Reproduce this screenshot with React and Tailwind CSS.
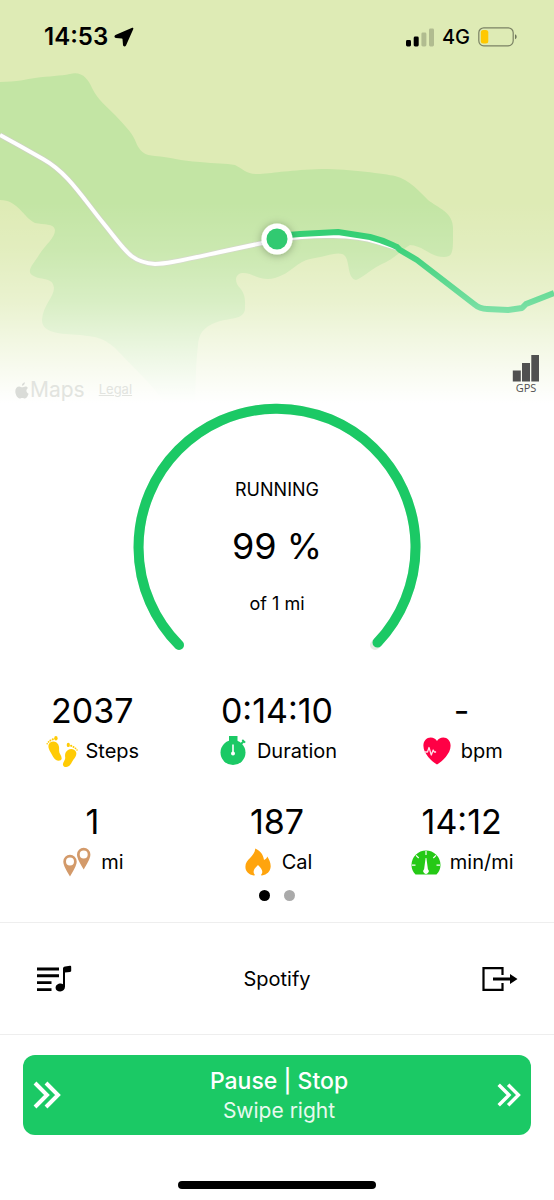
import React from 'react';

const StepsIcon = () => (
  <svg viewBox="0 0 32 32" className="w-8 h-8 shrink-0" fill="#ffcb05" aria-hidden="true">
    <path d="M2.500 10C3 7 7.500 5.200 10.500 7.500c2.900 2.300 2.800 5.500 2.600 8.300-.2 2.700 2.700 4.900 2.600 7.700-.2 2.300-3.600 2.900-5.700 1.500C7.400 23.200 6.600 20.500 4.700 17.500 3.300 15 2 12.800 2.500 10z" />
    <ellipse cx="9.900" cy="3.300" rx="1.700" ry="2.300" />
    <circle cx="6.800" cy="4.300" r="1.100" />
    <circle cx="4.400" cy="5.400" r="1" />
    <circle cx="2.600" cy="6.900" r=".9" />
    <circle cx="1.200" cy="8.700" r=".8" />
    <path d="M30.200 17.500c-.7-3.200-5-4.500-8.200-2.600-3 1.900-3.200 4.900-2.800 7.600.3 2.800-2.200 4.200-2.300 6.900 0 2.500 3.500 3.200 5.600 1.900 2.600-1.600 3.200-4.200 5-6.700 1.700-2.300 3.300-4.300 2.700-7.100z" />
    <ellipse cx="22.300" cy="9.900" rx="1.600" ry="2.200" />
    <circle cx="25.200" cy="10.800" r="1.100" />
    <circle cx="27.500" cy="11.900" r="1" />
    <circle cx="29.500" cy="13.300" r=".9" />
    <circle cx="31" cy="15" r=".8" />
  </svg>
);

const DurationIcon = () => (
  <svg viewBox="0 0 32 32" className="w-8 h-8 shrink-0" aria-hidden="true">
    <path d="M12 1h8.500v7H12z" fill="#1bc965" />
    <path d="M23.500 9.500l3.500-3.500" stroke="#1bc965" strokeWidth="2" />
    <path d="M25.300 4.900l2.800 2.800" stroke="#1bc965" strokeWidth="1.800" />
    <circle cx="16" cy="17.600" r="12.500" fill="#1bc965" />
    <path d="M16 9.500v9" stroke="#fff" strokeWidth="1.600" />
    <circle cx="16" cy="18.500" r="2" fill="#fff" />
  </svg>
);

const HeartIcon = () => (
  <svg viewBox="0 0 32 32" className="w-8 h-8 shrink-0" aria-hidden="true">
    <path d="M16 29.600C12.500 27.300 2.400 19.500 2.400 10.700 2.400 5.500 5.700 2.400 9.700 2.400c2.800 0 5 1.500 6.300 3.500 1.300-2 3.500-3.500 6.300-3.500 4 0 7.300 3.100 7.300 8.300 0 8.800-10.100 16.600-13.600 18.900z" fill="#ff0045" />
    <path d="M3 17h3.500l1.500-4.500 2.300 7.500 1.900-5 1.100 2h1.800" fill="none" stroke="#ffe1e9" strokeWidth="1.300" strokeLinejoin="round" />
  </svg>
);

const DistanceIcon = () => (
  <svg viewBox="0 0 32 32" className="w-8 h-8 shrink-0" fill="#d39a6a" fillRule="evenodd" aria-hidden="true">
    <path d="M9 8.700a6.700 6.700 0 0 1 6.700 6.700c0 4.300-3.600 9.400-6.700 15.100-3.100-5.700-6.700-10.800-6.700-15.100A6.700 6.700 0 0 1 9 8.700zm0 2.800a4 4 0 1 0 0 8 4 4 0 0 0 0-8z" />
    <path d="M22.700 1.800a6.700 6.700 0 0 1 6.700 6.700c0 4.300-3.600 9.400-6.700 15.100C19.600 17.900 16 12.800 16 8.500a6.700 6.700 0 0 1 6.700-6.700zm0 2.800a4 4 0 1 0 0 8 4 4 0 0 0 0-8z" />
  </svg>
);

const FlameIcon = () => (
  <svg viewBox="0 0 32 32" className="w-8 h-8 shrink-0" aria-hidden="true">
    <path d="M13.300 2.500c5 2.300 8 6.100 8.700 11.400 1.900-.7 2.900-1.900 3.300-3.400 2 3.100 3.800 6.800 3.300 10.800-.5 4.500-3.600 7.200-8.600 8.200-.8.200-1.300-.3-.7-1 2-2.400 1.100-5.400-3.300-9.500-4.400 4.100-5.400 7.100-3.400 9.500.6.700 0 1.200-.8 1C6.600 28.600 3.400 25.200 3.400 20.700c0-7.700 9.200-9.700 9.900-18.200z" fill="#ffa40d" />
  </svg>
);

const PaceIcon = () => (
  <svg viewBox="0 0 32 32" className="w-8 h-8 shrink-0" aria-hidden="true">
    <path d="M5.500 28.500C3 26.300 1.500 22.800 1.500 19a14.500 14.500 0 0 1 29 0c0 3.800-1.500 7.300-4 9.500z" fill="#25c916" />
    <path d="M16 5v4M6 9.300l2.700 2.700M26 9.300L23.300 12M2 19.200h3.500M30 19.200h-3.500" stroke="#fff" strokeWidth="1.200" />
    <path d="M15.600 12h.8l1.500 11.200a2.700 2.700 0 1 1-3.800 0z" fill="#fff" />
  </svg>
);

const Chevrons = ({ className }) => (
  <svg viewBox="0 0 28 28" className={className} fill="none" stroke="currentColor" strokeWidth="4" aria-hidden="true">
    <path d="M2 2l12 12L2 26M13 2l12 12-12 12" />
  </svg>
);

const stats = [
  { value: '2037', label: 'Steps', Icon: StepsIcon },
  { value: '0:14:10', label: 'Duration', Icon: DurationIcon },
  { value: '-', label: 'bpm', Icon: HeartIcon },
  { value: '1', label: 'mi', Icon: DistanceIcon },
  { value: '187', label: 'Cal', Icon: FlameIcon },
  { value: '14:12', label: 'min/mi', Icon: PaceIcon },
];

const StatusBar = () => (
  <div className="relative flex items-center justify-between pl-11 pr-9 pt-[21px]">
    <div className="flex items-center gap-[6px] text-2xl leading-8 font-semibold">
      <span>14:53</span>
      <svg viewBox="0 0 20 20" className="w-5 h-5" aria-hidden="true">
        <path d="M18.200.8c.8-.3 1.400.4 1.100 1.200L12 18.500c-.7 1.500-2.900 1.300-3-.4l-.5-6c0-.5-.2-.7-.7-.7l-5.900-.5C.2 10.700 0 8.700 1.400 8z" />
      </svg>
    </div>
    <div className="flex items-center gap-2 text-xl leading-8 font-medium">
      <svg viewBox="0 0 28 19" className="w-7 h-[19px]" aria-hidden="true">
        <rect x="0" y="12" width="5" height="6.500" rx="1.400" />
        <rect x="7.700" y="8.500" width="5" height="10" rx="1.400" />
        <rect x="15.400" y="4.500" width="5" height="14" rx="1.400" opacity=".2" />
        <rect x="23" y="0.500" width="5" height="18" rx="1.400" opacity=".2" />
      </svg>
      <span>4G</span>
      <svg viewBox="0 0 40 20" className="w-10 h-5" aria-hidden="true">
        <rect x=".8" y=".8" width="34.400" height="18" rx="5" fill="none" stroke="#000" strokeOpacity=".45" strokeWidth="1.200" />
        <rect x="2.800" y="3" width="7.500" height="13.500" rx="2.500" fill="#ffc800" />
        <path d="M37 7.300c2.200.8 2.200 4.200 0 5z" opacity=".5" />
      </svg>
    </div>
  </div>
);

const MapHeader = () => (
  <header className="relative flex flex-col justify-between h-[403px]">
    <svg viewBox="0 0 554 403" preserveAspectRatio="xMidYMid slice" className="absolute inset-0 w-full h-full" role="img" aria-label="Route map">
      <defs>
        <linearGradient id="fade" x1="0" y1="0" x2="0" y2="1">
          <stop offset=".5" stopColor="#fff" stopOpacity="0" />
          <stop offset=".62" stopColor="#fff" stopOpacity=".13" />
          <stop offset=".75" stopColor="#fff" stopOpacity=".36" />
          <stop offset=".88" stopColor="#fff" stopOpacity=".7" />
          <stop offset="1" stopColor="#fff" />
        </linearGradient>
        <filter id="markerShadow" x="-50%" y="-50%" width="200%" height="200%">
          <feDropShadow dx="0" dy="1" stdDeviation="4" floodOpacity=".3" />
        </filter>
      </defs>
      <rect width="554" height="403" fill="#deebb5" />
      {/* woodland */}
      <path
        d="M0 82C17 82 27 79 35 78 50 76 60 76 70 74 82 71 88 79 92 88 98 100 107 107 115 115 124 125 131 131 135 140 140 153 145 155 155 156 170 157 180 161 200 162 215 164 226 163 235 165 243 169 247 175 260 174 275 173 290 170 322 169 350 169 385 174 395 176 410 180 420 192 428 200 438 208 453 212 453 228V240C453 254 451 257 444 257 430 257 424 246 410 245 400 251 396 258 380 265 370 270 362 278 356 280 347 278 350 262 345 256 340 250 325 257 310 259 298 261 290 274 275 278 260 282 252 272 242 273 235 274 234 282 240 288 246 295 245 302 245 308 245 319 232 318 220 321 204 326 199 333 198 345 195 370 196 390 195 403H165C150 382 130 364 115 348 102 337 96 337 80 335 60 334 42 333 42 320 43 305 54 297 54 288 53 276 40 281 32 275 26 271 34 263 39 255 46 244 55 238 55 230 54 223 44 225 35 223 23 217 18 200 0 200z"
        fill="#c3e5a4"
      />
      <path d="M0 135L20 146 43 159C68 173 82 197 104 224 126 251 130 262 155 264 170 264 190 258 277 240 315 234 355 235 377 242L400 249" fill="none" stroke="#cdd3c0" strokeWidth="5.500" />
      <path d="M0 135L20 146 43 159C68 173 82 197 104 224 126 251 130 262 155 264 170 264 190 258 277 240 315 234 355 235 377 242L400 249" fill="none" stroke="#fff" strokeWidth="4" />
      <path d="M277 236L300 234 338 232 370 237C386 241 390 244 397 247L400 250 417 260 474 304Q480 309 487 309L508 310 522 308 526 304 554 293" fill="none" stroke="#23cb68" strokeWidth="6" strokeLinejoin="round" />
      <rect width="554" height="403" fill="url(#fade)" />
      <circle cx="277" cy="239" r="15.500" fill="#fff" filter="url(#markerShadow)" />
      <circle cx="277" cy="239" r="10.500" fill="#31ca71" />
    </svg>

    <StatusBar />

    <div className="relative flex items-end justify-between pl-[14px] pr-[14px] pb-[1px]">
      <div className="flex items-center text-[#e2e4df]">
        <svg viewBox="0 0 14 17" className="w-4 h-[17px]" fill="#dadcd8" aria-hidden="true">
          <path d="M9.900.2c.1 1.800-1.300 3.500-3 3.500C6.700 2 8.200.4 9.900.2zM12.900 6c-2.300 1.500-1.800 4.700.7 5.700-.7 2-2 4.800-3.700 4.800-1 0-1.400-.6-2.600-.6s-1.700.6-2.600.6C2.600 16.500.3 12.700.3 9.300c0-3.100 1.900-4.900 3.900-4.900 1.300 0 2.200.8 3.100.8.900 0 1.900-.9 3.500-.8.900 0 1.700.5 2.100 1.600z" />
        </svg>
        <span className="text-[21px] leading-6">Maps</span>
        <a href="#" className="ml-[14px] text-[13px] underline">Legal</a>
      </div>
      <div className="flex flex-col items-center pb-2">
        <svg viewBox="0 0 28 28" className="w-7 h-7" fill="#505050" aria-hidden="true">
          <path d="M.8 16.500h8v11h-8zM10 9h8v18.500h-8zM19.300 1H27v26.500h-7.700z" />
        </svg>
        <span className="text-[11px] leading-3 text-[#505050] font-['Open_Sans',sans-serif]">GPS</span>
      </div>
    </div>
  </header>
);

const Gauge = () => (
  <section className="relative w-[288px] mx-auto text-center">
    <svg viewBox="0 0 288 250" className="w-full" fill="none" strokeWidth="10" strokeLinecap="round" aria-hidden="true">
      <path d="M46 242A138.500 138.500 0 1 1 242 242" stroke="#e6ece4" />
      <path d="M46 242A138.500 138.500 0 1 1 244.500 239.500" stroke="#1bc965" />
    </svg>
    {/* text sits inside the ring */}
    <div className="absolute inset-0 flex flex-col items-center pt-[75px]">
      <h1 className="text-lg leading-6">RUNNING</h1>
      <p className="mt-6 text-4xl leading-10">99 %</p>
      <p className="mt-6 text-lg leading-7">of 1 mi</p>
    </div>
  </section>
);

const App = () => {
  return (
    <div className="min-h-screen bg-white text-black font-['Inter',sans-serif]">
      <MapHeader />

      <main>
        <Gauge />

        {/* Stats */}
        <dl className="grid grid-cols-3 gap-y-[31px] mt-[38px]">
          {stats.map(({ value, label, Icon }) => (
            <div key={label} className="flex flex-col-reverse items-center">
              <dt className="flex items-center gap-2 h-10 text-xl">
                <Icon />
                {label}
              </dt>
              <dd className="text-[34px] leading-10">{value}</dd>
            </div>
          ))}
        </dl>

        {/* Page dots */}
        <div className="flex justify-center gap-[14px] mt-2">
          <button aria-label="Page 1" className="w-[11px] h-[11px] rounded-full bg-black" />
          <button aria-label="Page 2" className="w-[11px] h-[11px] rounded-full bg-[#aaaaaa]" />
        </div>

        {/* Music */}
        <div className="flex items-center justify-between mt-[21px] h-[113px] px-9 border-y border-[#eeeeee]">
          <button aria-label="Playlist">
            <svg viewBox="0 0 36 28" className="w-9 h-7" aria-hidden="true">
              <path d="M1 2.500h22v2.900H1zM1 9.300h22v2.900H1zM1 16.200h14.500v2.900H1zM1 23.200h14.500v2.900H1z" />
              <path d="M27 4c0-1.600.6-2.300 2.200-2.600L34 .8c.8-.1 1.200.2 1.200.9v4c0 .7-.4 1.100-1.200 1.200l-5 .5v14.200c0 2.900-1.900 4.900-4.800 4.900-2.500 0-4.600-1.200-4.600-3.500 0-2.700 2.300-4.400 5-4.400 1 0 1.800.2 2.400.6z" />
            </svg>
          </button>
          <span className="text-xl">Spotify</span>
          <button aria-label="Open Spotify">
            <svg viewBox="0 0 36 28" className="w-9 h-7" aria-hidden="true">
              <path d="M20.500 10V3.200H1.500v21.600h19V18" fill="none" stroke="#000" strokeWidth="2.200" />
              <path d="M11 12.600h17V9l7.500 5-7.500 5v-3.600H11z" />
            </svg>
          </button>
        </div>

        {/* Swipe control */}
        <div className="px-[23px] pt-5">
          <button className="flex items-center justify-between w-full h-20 px-[10px] rounded-xl bg-[#1bc965] text-white">
            <Chevrons className="w-7 h-7" />
            <span className="flex flex-col">
              <span className="text-[23px] leading-8 font-medium">Pause | Stop</span>
              <span className="text-[21px] leading-7 text-[#e8f9ef]">Swipe right</span>
            </span>
            <Chevrons className="w-6 h-6" />
          </button>
        </div>
      </main>

      <div className="w-[198px] h-2 mt-[46px] mx-auto rounded-full bg-black" />
    </div>
  );
};

export default App;
